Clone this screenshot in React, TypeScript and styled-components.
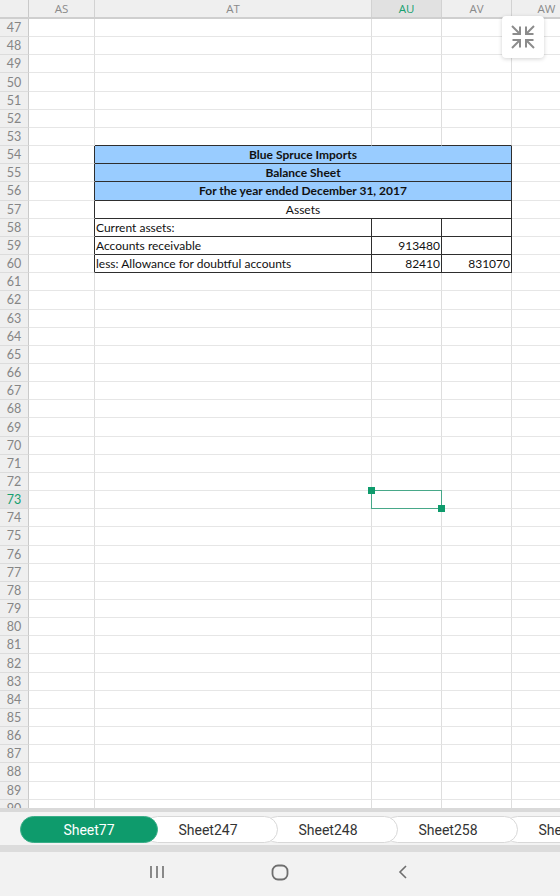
import React from "react";
import styled, { createGlobalStyle } from "styled-components";

const GlobalStyle = createGlobalStyle`
  html, body { margin: 0; padding: 0; background: #ffffff; }
  body { width: 560px; height: 896px; overflow: hidden; font-family: Lato, "Liberation Sans", sans-serif; }
  * { box-sizing: border-box; }
`;

const COLS = "29px 66px 277px 70px 70px 70px";
const ROW_H = 18.17;
const DARK = "#2e2e2e";
const GREEN = "#0e9b6c";

const Screen = styled.div`
  display: flex;
  flex-direction: column;
  width: 560px;
  height: 896px;
  overflow: hidden;
`;

const SheetArea = styled.div`
  position: relative;
  height: 808px;
  overflow: hidden;
  flex: none;
`;

const HeaderRow = styled.div`
  display: grid;
  grid-template-columns: ${COLS};
  height: 19px;
  background: #efefef;
  border-bottom: 2px solid #cfcfcf;
`;

const Corner = styled.div`
  border-right: 1px solid #c9c9c9;
`;

const ColHead = styled.div<{ $active?: boolean }>`
  display: flex;
  align-items: center;
  justify-content: center;
  padding-bottom: 1px;
  border-right: 1px solid #d2d2d2;
  font-family: "Open Sans", sans-serif;
  font-size: 11.5px;
  font-weight: 400;
  color: ${(p) => (p.$active ? "#16a06f" : "#8a8a8a")};
  background: ${(p) => (p.$active ? "#e1e1e1" : "transparent")};
  white-space: nowrap;
  overflow: hidden;
`;

const GridRow = styled.div`
  display: grid;
  grid-template-columns: ${COLS};
  height: ${ROW_H}px;
`;

const RowHead = styled.div<{ $active?: boolean }>`
  display: flex;
  align-items: center;
  justify-content: center;
  background: ${(p) => (p.$active ? "#e4e4e4" : "#efefef")};
  border-right: 1px solid #c9c9c9;
  border-bottom: 1px solid #dcdcdc;
  font-family: Lato, sans-serif;
  font-size: 12.5px;
  color: ${(p) => (p.$active ? "#16a06f" : "#858585")};
`;

const Cell = styled.div<{
  $span?: number;
  $br?: string;
  $bb?: string;
  $bg?: string;
  $align?: "left" | "center" | "right";
  $bold?: boolean;
  $host?: boolean;
}>`
  grid-column: span ${(p) => p.$span ?? 1};
  display: flex;
  align-items: center;
  justify-content: ${(p) =>
    p.$align === "center" ? "center" : p.$align === "right" ? "flex-end" : "flex-start"};
  padding: 0 1px 0 1px;
  border-right: 1px solid ${(p) => p.$br ?? "#dedede"};
  border-bottom: 1px solid ${(p) => p.$bb ?? "#e6e6e6"};
  background: ${(p) => p.$bg ?? "transparent"};
  font-family: Lato, "Liberation Sans", sans-serif;
  font-size: 12px;
  font-weight: ${(p) => (p.$bold ? 700 : 400)};
  color: #111;
  white-space: nowrap;
  position: ${(p) => (p.$host ? "relative" : "static")};
`;

const Selection = styled.div`
  position: absolute;
  left: -1px;
  top: -1px;
  right: -1px;
  bottom: -1px;
  border: 1px solid #47a889;
  z-index: 3;
`;

const Handle = styled.div<{ $corner: "tl" | "br" }>`
  position: absolute;
  width: 7px;
  height: 7px;
  background: ${GREEN};
  ${(p) => (p.$corner === "tl" ? "left: -4px; top: -4px;" : "right: -4px; bottom: -4px;")}
`;

const FloatButton = styled.div`
  position: absolute;
  left: 502px;
  top: 16px;
  width: 42px;
  height: 42px;
  background: #ffffff;
  border-radius: 4px;
  box-shadow: 0 1px 4px rgba(0, 0, 0, 0.18);
  display: flex;
  align-items: center;
  justify-content: center;
  z-index: 5;
`;

const TabsBar = styled.div`
  display: flex;
  flex-direction: column;
  height: 44px;
  flex: none;
`;

const TopBand = styled.div`
  height: 4px;
  background: #d9d9d9;
`;

const BottomBand = styled.div`
  height: 7px;
  background: #dcdcdc;
`;

const Strip = styled.div`
  flex: 1;
  display: flex;
  align-items: flex-start;
  padding: 4px 0 0 20px;
  background: #f3f3f3;
  overflow: hidden;
`;

const Tab = styled.div<{ $active?: boolean; $z: number }>`
  flex: none;
  position: relative;
  z-index: ${(p) => p.$z};
  height: 27px;
  width: ${(p) => (p.$active ? 138 : 134)}px;
  margin-left: ${(p) => (p.$active ? 0 : -14)}px;
  padding-right: ${(p) => (p.$active ? 0 : 6)}px;
  border-radius: 14px;
  background: ${(p) => (p.$active ? GREEN : "#ffffff")};
  border: 1px solid ${(p) => (p.$active ? "#3aae88" : "#d8d8d8")};
  display: flex;
  align-items: center;
  justify-content: center;
  font-family: Roboto, sans-serif;
  font-size: 14px;
  color: ${(p) => (p.$active ? "#ffffff" : "#333333")};
  white-space: nowrap;
`;

const NavBar = styled.div`
  flex: 1;
  background: #f2f2f2;
  display: flex;
  align-items: center;
  justify-content: center;
  gap: 83px;
  padding-bottom: 4px;
`;

const NavIcon = styled.div`
  width: 40px;
  height: 20px;
  display: flex;
  align-items: center;
  justify-content: center;
`;

type CellDef = {
  text?: string;
  span?: number;
  br?: string;
  bb?: string;
  bg?: string;
  align?: "left" | "center" | "right";
  bold?: boolean;
  host?: boolean;
};

const BLUE = "#99ccff";

function buildRow(r: number): CellDef[] {
  const as: CellDef = {};
  if (r >= 54 && r <= 60) as.br = DARK;
  const title: Record<number, string> = {
    54: "Blue Spruce Imports",
    55: "Balance Sheet",
    56: "For the year ended December 31, 2017",
    57: "Assets",
  };
  if (title[r] !== undefined) {
    const blue = r <= 56;
    return [
      as,
      { text: title[r], span: 3, br: DARK, bb: DARK, bg: blue ? BLUE : "#ffffff", align: "center", bold: blue },
      {},
    ];
  }
  if (r >= 58 && r <= 60) {
    const labels: Record<number, [string, string, string]> = {
      58: ["Current assets:", "", ""],
      59: ["Accounts receivable", "913480", ""],
      60: ["less: Allowance for doubtful accounts", "82410", "831070"],
    };
    const [a, b, c] = labels[r];
    return [
      as,
      { text: a, br: DARK, bb: DARK },
      { text: b, br: DARK, bb: DARK, align: "right" },
      { text: c, br: DARK, bb: DARK, align: "right" },
      {},
    ];
  }
  const top = r === 53 ? DARK : undefined;
  return [
    as,
    { bb: top },
    { bb: top, host: r === 73 },
    { bb: top },
    {},
  ];
}

const rows = Array.from({ length: 44 }, (_, i) => 47 + i);
const colHeads = ["AS", "AT", "AU", "AV", "AW"];
const tabs = ["Sheet77", "Sheet247", "Sheet248", "Sheet258", "Sheet259"];

const ShrinkIcon = () => (
  <svg width="28" height="28" viewBox="0 0 28 28" fill="none" stroke="#8c8c8c" strokeWidth="2">
    <path d="M3 3 L11 11 M3.5 11 H11 V3.5" />
    <path d="M25 3 L17 11 M24.5 11 H17 V3.5" />
    <path d="M3 25 L11 17 M3.5 17 H11 V24.5" />
    <path d="M25 25 L17 17 M24.5 17 H17 V24.5" />
  </svg>
);

export default function App() {
  return (
    <>
      <GlobalStyle />
      <Screen>
        <SheetArea>
          <HeaderRow>
            <Corner />
            {colHeads.map((h) => (
              <ColHead key={h} $active={h === "AU"}>
                {h}
              </ColHead>
            ))}
          </HeaderRow>
          {rows.map((r) => (
            <GridRow key={r}>
              <RowHead $active={r === 73}>{r}</RowHead>
              {buildRow(r).map((c, i) => (
                <Cell
                  key={i}
                  $span={c.span}
                  $br={c.br}
                  $bb={c.bb}
                  $bg={c.bg}
                  $align={c.align}
                  $bold={c.bold}
                  $host={c.host}
                >
                  {c.text}
                  {c.host && (
                    <Selection>
                      <Handle $corner="tl" />
                      <Handle $corner="br" />
                    </Selection>
                  )}
                </Cell>
              ))}
            </GridRow>
          ))}
          <FloatButton>
            <ShrinkIcon />
          </FloatButton>
        </SheetArea>
        <TabsBar>
          <TopBand />
          <Strip>
            {tabs.map((t, i) => (
              <Tab key={t} $active={i === 0} $z={10 - i}>
                {t}
              </Tab>
            ))}
          </Strip>
          <BottomBand />
        </TabsBar>
        <NavBar>
          <NavIcon>
            <svg width="16" height="14" viewBox="0 0 16 14" fill="none" stroke="#6e6e6e" strokeWidth="1.6">
              <path d="M2 1 V13 M8 1 V13 M14 1 V13" />
            </svg>
          </NavIcon>
          <NavIcon>
            <svg width="18" height="17" viewBox="0 0 18 17" fill="none" stroke="#6e6e6e" strokeWidth="1.8">
              <rect x="1.5" y="1.5" width="15" height="14" rx="5.5" />
            </svg>
          </NavIcon>
          <NavIcon>
            <svg width="10" height="14" viewBox="0 0 10 14" fill="none" stroke="#6e6e6e" strokeWidth="1.6">
              <path d="M8 1 L2 7 L8 13" />
            </svg>
          </NavIcon>
        </NavBar>
      </Screen>
    </>
  );
}
